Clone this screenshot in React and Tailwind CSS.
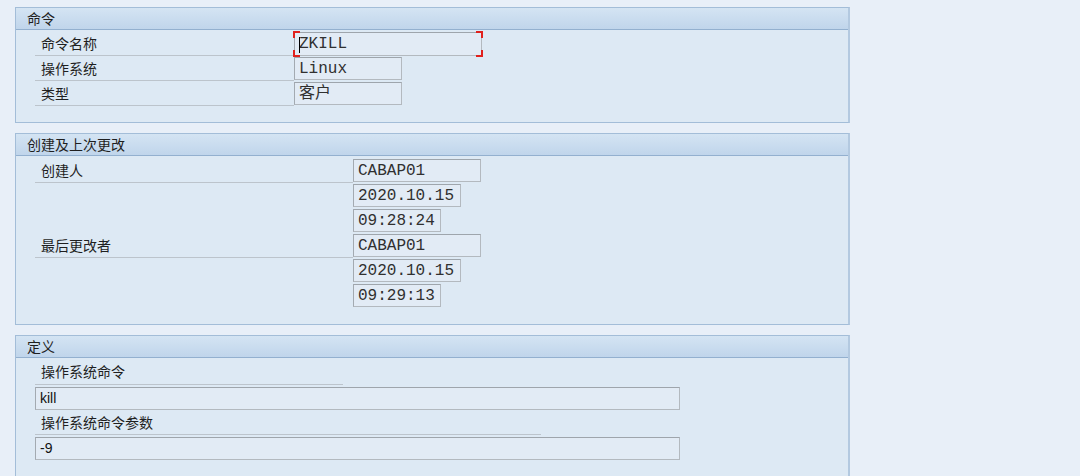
import React from "react";

const cjk = { fontFamily: '"Noto Sans CJK SC", "Noto Sans", sans-serif' };
const mono = { fontFamily: '"Liberation Mono", "Noto Sans CJK SC", monospace' };
const sans = { fontFamily: '"Liberation Sans", Arial, sans-serif' };

function Panel({ title, className, children }) {
	return (
		<div className={"w-[835px] border border-[#a3bdd8] border-r-2 border-r-[#b3c9e0] bg-[#dde9f4] " + className}>
			<div className="h-[22px] border-b border-[#93b0cf] bg-gradient-to-b from-[#d4e4f3] to-[#c0d5eb] pl-[11px] text-[14px] leading-[21px] text-[#1f1f1f]" style={cjk}>
				{title}
			</div>
			{children}
		</div>
	);
}

function Field({ value, width, focused }) {
	return (
		<div
			className={"relative h-[23px] border border-[#b3b9bf] border-t-[#9ea5ac] border-l-[#a3aab1] bg-[#e2ebf5] pl-[4px] text-[16px] leading-[23px] text-[#303030] " + width}
			style={mono}
		>
			{value}
			{focused && (
				<>
					<span className="absolute left-[-2px] top-[-2px] h-[7px] w-[7px] border-l-2 border-t-2 border-[#e0201c]" />
					<span className="absolute right-[-2px] top-[-2px] h-[7px] w-[7px] border-r-2 border-t-2 border-[#e0201c]" />
					<span className="absolute bottom-[-2px] left-[-2px] h-[7px] w-[7px] border-b-2 border-l-2 border-[#e0201c]" />
					<span className="absolute bottom-[-2px] right-[-2px] h-[7px] w-[7px] border-b-2 border-r-2 border-[#e0201c]" />
					<span className="absolute left-[4px] top-[4px] h-[16px] w-[1px] bg-black" />
				</>
			)}
		</div>
	);
}

function Row({ label, labelWidth, children }) {
	return (
		<div className="flex h-[25px] items-center">
			<div
				className={"flex h-full items-center pl-[6px] text-[14px] text-[#1f1f1f] " + labelWidth + (label ? " border-b border-[#bcc4cc]" : "")}
				style={cjk}
			>
				{label}
			</div>
			{children}
		</div>
	);
}

export default function App() {
	return (
		<div className="h-[476px] w-[1080px] overflow-hidden bg-[#e8eff8] pl-[15px] pt-[7px]">
			<Panel title="命令" className="h-[116px]">
				<div className="pl-[19px] pt-[1px]">
					<Row label="命令名称" labelWidth="w-[259px]">
						<Field value="ZKILL" width="w-[188px] h-[24px]" focused />
					</Row>
					<Row label="操作系统" labelWidth="w-[259px]">
						<Field value="Linux" width="w-[108px]" />
					</Row>
					<Row label="类型" labelWidth="w-[259px]">
						<Field value="客户" width="w-[108px]" />
					</Row>
				</div>
			</Panel>

			<Panel title="创建及上次更改" className="mt-[10px] h-[192px]">
				<div className="pl-[19px] pt-[2px]">
					<Row label="创建人" labelWidth="w-[318px]">
						<Field value="CABAP01" width="w-[128px]" />
					</Row>
					<Row labelWidth="w-[318px]">
						<Field value="2020.10.15" width="w-[108px]" />
					</Row>
					<Row labelWidth="w-[318px]">
						<Field value="09:28:24" width="w-[88px]" />
					</Row>
					<Row label="最后更改者" labelWidth="w-[318px]">
						<Field value="CABAP01" width="w-[128px]" />
					</Row>
					<Row labelWidth="w-[318px]">
						<Field value="2020.10.15" width="w-[108px]" />
					</Row>
					<Row labelWidth="w-[318px]">
						<Field value="09:29:13" width="w-[88px]" />
					</Row>
				</div>
			</Panel>

			<Panel title="定义" className="mt-[10px] h-[160px]">
				<div className="pl-[19px] pt-[1px]">
					<div className="flex h-[26px] w-[308px] items-center border-b border-[#bcc4cc] pl-[6px] text-[14px] text-[#1f1f1f]" style={cjk}>
						操作系统命令
					</div>
					<div
						className="mt-[2px] h-[23px] w-[645px] border border-[#b3b9bf] border-t-[#9ea5ac] border-l-[#a3aab1] bg-[#e2ebf5] pl-[4px] text-[14px] leading-[21px] text-[#111]"
						style={sans}
					>
						kill
					</div>
					<div className="flex h-[25px] w-[506px] items-center border-b border-[#bcc4cc] pl-[6px] text-[14px] text-[#1f1f1f]" style={cjk}>
						操作系统命令参数
					</div>
					<div
						className="mt-[2px] h-[23px] w-[645px] border border-[#b3b9bf] border-t-[#9ea5ac] border-l-[#a3aab1] bg-[#e2ebf5] pl-[4px] text-[14px] leading-[21px] text-[#111]"
						style={sans}
					>
						-9
					</div>
				</div>
			</Panel>
		</div>
	);
}
